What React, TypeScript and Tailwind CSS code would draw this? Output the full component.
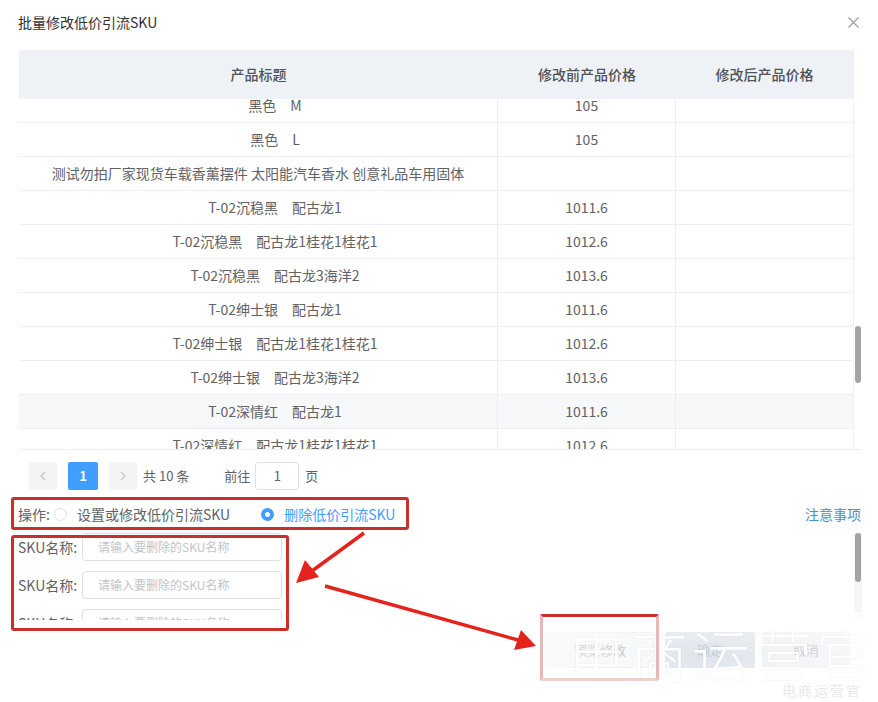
import React from "react";

const rows: { title: string; before: string; striped?: boolean; child?: boolean }[] = [
  { title: "黑色\u3000M", before: "105", child: true },
  { title: "黑色\u3000L", before: "105", child: true },
  { title: "测试勿拍厂家现货车载香薰摆件 太阳能汽车香水 创意礼品车用固体", before: "" },
  { title: "T-02沉稳黑\u3000配古龙1", before: "1011.6", child: true },
  { title: "T-02沉稳黑\u3000配古龙1桂花1桂花1", before: "1012.6", child: true },
  { title: "T-02沉稳黑\u3000配古龙3海洋2", before: "1013.6", child: true },
  { title: "T-02绅士银\u3000配古龙1", before: "1011.6", child: true },
  { title: "T-02绅士银\u3000配古龙1桂花1桂花1", before: "1012.6", child: true },
  { title: "T-02绅士银\u3000配古龙3海洋2", before: "1013.6", child: true },
  { title: "T-02深情红\u3000配古龙1", before: "1011.6", striped: true, child: true },
  { title: "T-02深情红\u3000配古龙1桂花1桂花1", before: "1012.6", child: true },
];

function SkuRow() {
  return (
    <div className="flex items-center h-[28px]">
      <span className="w-[64px] text-[14px] text-[#606266] whitespace-nowrap">SKU名称:</span>
      <div className="w-[200px] h-[28px] border border-[#dcdfe6] rounded-[4px] flex items-center pl-[15px] text-[12px] text-[#c0c4cc]">
        请输入要删除的SKU名称
      </div>
    </div>
  );
}

export default function App() {
  return (
    <div
      className="relative w-[878px] h-[702px] bg-white overflow-hidden text-[#606266]"
      style={{ fontFamily: '"Noto Sans CJK SC", "Noto Sans", sans-serif' }}
    >
      {/* header */}
      <div className="h-[44px] flex items-center justify-between pl-[18px] pr-[19px]">
        <span className="text-[14px] text-[#303133]">批量修改低价引流SKU</span>
        <svg width="11" height="11" viewBox="0 0 11 11">
          <path d="M0.5 0.5 L10.5 10.5 M10.5 0.5 L0.5 10.5" stroke="#9a9ca2" strokeWidth="1.1" />
        </svg>
      </div>

      {/* table */}
      <div className="mt-[6px] ml-[19px] w-[843px] h-[400px] flex border-b border-[#ebeef5]">
        <div className="w-[834px] flex flex-col overflow-hidden">
          <div className="h-[49px] shrink-0 flex bg-[#eef1f6] text-[14px] font-medium text-[#505257]">
            <div className="w-[479px] flex items-center justify-center">产品标题</div>
            <div className="w-[178px] flex items-center justify-center">修改前产品价格</div>
            <div className="flex-1 flex items-center justify-center">修改后产品价格</div>
          </div>
          <div className="flex-1 overflow-hidden">
            <div className="-mt-[10px]">
              {rows.map((r, i) => (
                <div
                  key={i}
                  className={`h-[34px] flex border-b border-[#ebeef5] text-[14px] text-[#606266] ${
                    r.striped ? "bg-[#f7f8fa]" : "bg-white"
                  }`}
                >
                  <div
                    className={`w-[479px] flex items-center justify-center border-r border-[#ebeef5] whitespace-pre ${
                      r.child ? "pl-[34px]" : ""
                    }`}
                  >
                    {r.title}
                  </div>
                  <div className="w-[178px] flex items-center justify-center border-r border-[#ebeef5]">
                    {r.before}
                  </div>
                  <div className="flex-1" />
                </div>
              ))}
            </div>
          </div>
        </div>
        <div className="w-[9px] border-l border-[#f0f0f0] bg-white">
          <div className="mt-[276px] ml-[1px] w-[6px] h-[57px] rounded-full bg-[#a3a3a3]" />
        </div>
      </div>

      {/* pagination */}
      <div className="mt-[12px] ml-[29px] h-[28px] flex items-center text-[13px] text-[#606266]">
        <div className="w-[28px] h-[28px] bg-[#f4f4f5] rounded-[2px] flex items-center justify-center">
          <svg width="8" height="10" viewBox="0 0 8 10">
            <path d="M6 1 L2 5 L6 9" stroke="#c0c4cc" strokeWidth="1.3" fill="none" />
          </svg>
        </div>
        <div className="ml-[11px] w-[30px] h-[28px] bg-[#409eff] rounded-[2px] flex items-center justify-center text-white font-bold">
          1
        </div>
        <div className="ml-[11px] w-[28px] h-[28px] bg-[#f4f4f5] rounded-[2px] flex items-center justify-center">
          <svg width="8" height="10" viewBox="0 0 8 10">
            <path d="M2 1 L6 5 L2 9" stroke="#c0c4cc" strokeWidth="1.3" fill="none" />
          </svg>
        </div>
        <span className="ml-[6px]">共 10 条</span>
        <span className="ml-[35px]">前往</span>
        <div className="ml-[5px] w-[44px] h-[28px] border border-[#dcdfe6] rounded-[3px] flex items-center justify-center">
          1
        </div>
        <span className="ml-[6px]">页</span>
      </div>

      {/* operation row */}
      <div className="mt-[8px] h-[32px] flex items-center justify-between pl-[18px] pr-[17px] text-[14px]">
        <div className="flex items-center">
          <span className="text-[#606266]">操作:</span>
          <span className="ml-[4px] w-[13px] h-[13px] rounded-full border border-[#dcdfe6] bg-white" />
          <span className="ml-[10px] text-[#606266]">设置或修改低价引流SKU</span>
          <span className="ml-[31px] w-[13px] h-[13px] rounded-full bg-[#409eff] flex items-center justify-center">
            <span className="w-[5px] h-[5px] rounded-full bg-white" />
          </span>
          <span className="ml-[10px] text-[#409eff]">删除低价引流SKU</span>
        </div>
        <span className="text-[14px] text-[#4591c7]">注意事项</span>
      </div>

      {/* form area */}
      <div className="mt-[3px] h-[87px] flex">
        <div className="flex-1 overflow-hidden pl-[18px] flex flex-col gap-[10px]">
          <SkuRow />
          <SkuRow />
          <SkuRow />
        </div>
        <div className="w-[8px] mr-[16px] bg-[#f6f6f6]">
          <div className="ml-[1px] w-[6px] h-[49px] rounded-full bg-[#a3a3a3]" />
        </div>
      </div>

      {/* footer buttons */}
      <div className="mt-[12px] pr-[28px] flex justify-end text-[13px]">
        <div className="w-[110px] h-[36px] border border-[#eceef1] bg-[#f5f6f7] rounded-[3px] flex items-center justify-center text-[#b9bdc4]">
          预览修改
        </div>
        <div className="ml-[10px] w-[90px] h-[36px] bg-[#dfe5ec] rounded-[3px] flex items-center justify-center text-[#c2cad4]">
          确定
        </div>
        <div className="ml-[7px] w-[88px] h-[36px] bg-[#eff0f2] rounded-[3px] flex items-center justify-center text-[#b5b8be]">
          取消
        </div>
      </div>

      {/* watermark */}
      <div className="absolute left-[520px] top-[612px] w-[358px] h-[90px] bg-[radial-gradient(ellipse_at_center,rgba(255,255,255,0),rgba(255,255,255,0.8))]" />
      <div
        className="absolute left-[568px] top-[618px] text-[58px] leading-[70px] tracking-[4px] text-white font-light whitespace-nowrap"
        style={{ textShadow: "0 0 1px rgba(150,158,170,0.35)" }}
      >
        电商运营官
      </div>
      <div className="absolute left-[782px] top-[680px] text-[14px] text-[#e7e9ec] tracking-[2px]">电商运营官</div>

      {/* annotations */}
      <div className="absolute left-[11px] top-[497px] w-[398px] h-[33px] border-[3px] border-[#c9302c] rounded-[3px]" />
      <div className="absolute left-[11px] top-[535px] w-[278px] h-[96px] border-[3px] border-[#c9302c] rounded-[3px]" />
      <div className="absolute left-[540px] top-[614px] w-[119px] h-[67px] border-[3px] border-[#c9302c] border-b-[#f0d0cf] border-l-[#e8b8b6] border-r-[#e8b8b6] rounded-[2px]" />
      <svg className="absolute left-0 top-0" width="878" height="702" viewBox="0 0 878 702">
        <line x1="364" y1="533" x2="312" y2="571" stroke="#e3231c" strokeWidth="3.5" />
        <polygon points="296,583 305,560 319,577" fill="#e3231c" />
        <line x1="325" y1="586" x2="518" y2="640" stroke="#e3231c" strokeWidth="3.5" />
        <polygon points="536,646 514,650 521,630" fill="#e3231c" />
      </svg>
    </div>
  );
}
